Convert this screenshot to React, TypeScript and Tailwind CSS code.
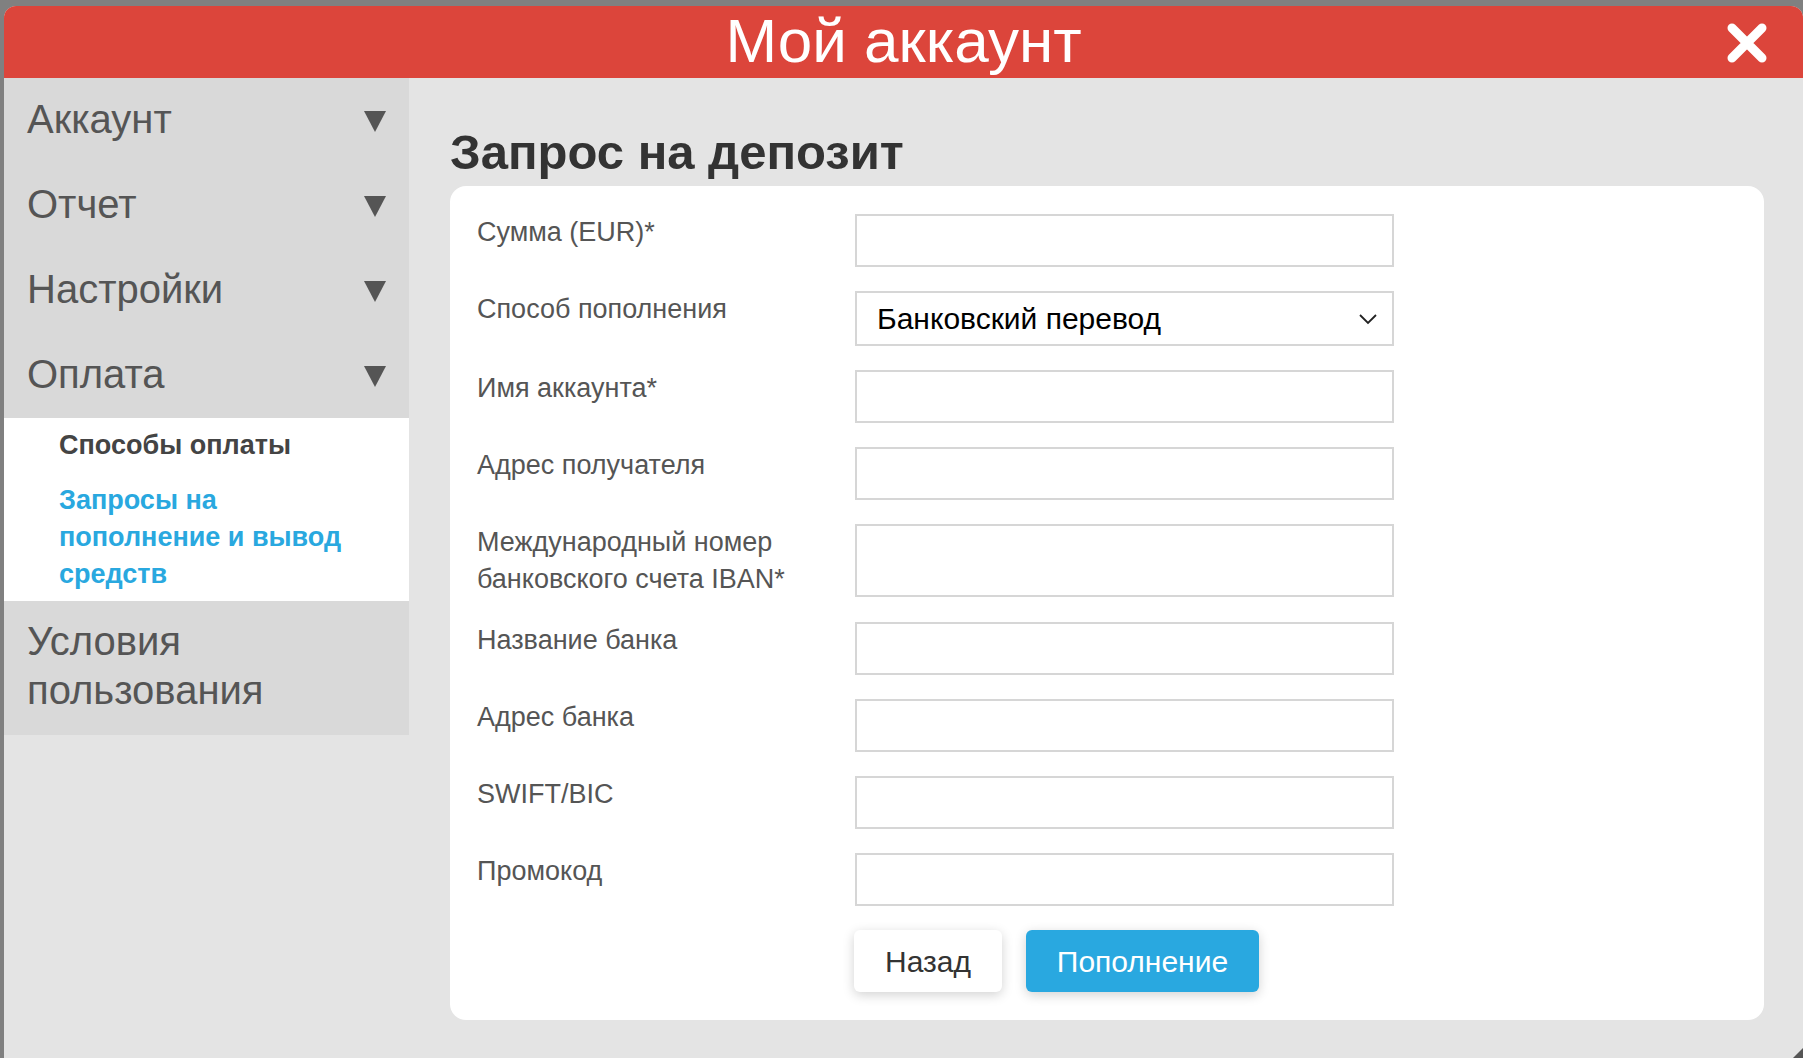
import { useState } from "react";

const fields = [
  { label: "Сумма (EUR)*", h: "h-[53px]" },
  { label: "Способ пополнения", select: true },
  { label: "Имя аккаунта*", h: "h-[53px]" },
  { label: "Адрес получателя", h: "h-[53px]" },
  { label: "Международный номер банковского счета IBAN*", h: "h-[73px]" },
  { label: "Название банка", h: "h-[53px]" },
  { label: "Адрес банка", h: "h-[53px]" },
  { label: "SWIFT/BIC", h: "h-[53px]" },
  { label: "Промокод", h: "h-[53px]" },
];

function Arrow() {
  return (
    <svg width="24" height="24" viewBox="0 0 24 24" className="shrink-0">
      <polygon points="1,2 23,2 12,23" fill="#555" />
    </svg>
  );
}

function MenuItem({ title }: { title: string }) {
  return (
    <div className="h-[85px] flex items-center justify-between pl-[23px] pr-[22px]">
      <span className="text-[40px] text-[#555] pb-[4px]">{title}</span>
      <Arrow />
    </div>
  );
}

export default function App() {
  const [method, setMethod] = useState("bank");
  return (
    <div className="w-[1803px] h-[1058px] bg-[#808080] pt-[6px] pl-[4px] overflow-hidden font-['Liberation_Sans',Arial,sans-serif]">
      <div className="h-full flex flex-col rounded-t-[12px] overflow-hidden bg-[#e4e4e4] relative">
        <div className="h-[72px] shrink-0 bg-[#dc453b] flex items-start justify-center relative">
          <h1 className="text-[62px] leading-[70px] text-white">Мой аккаунт</h1>
          <button className="absolute right-[35px] top-[16px]">
            <svg width="42" height="42" viewBox="0 0 42 42">
              <path d="M6 6 L36 36 M36 6 L6 36" stroke="#fff" strokeWidth="9" strokeLinecap="round" />
            </svg>
          </button>
        </div>

        <div className="flex flex-1">
          <aside className="w-[405px] self-start bg-[#d9d9d9]">
            <MenuItem title="Аккаунт" />
            <MenuItem title="Отчет" />
            <MenuItem title="Настройки" />
            <MenuItem title="Оплата" />
            <div className="bg-white pl-[55px] pt-[9px] pb-[8px] font-bold text-[27px] leading-[37px]">
              <div className="text-[#444]">Способы оплаты</div>
              <div className="text-[#29a8df] mt-[18px] w-[310px]">Запросы на пополнение и вывод средств</div>
            </div>
            <div className="px-[23px] pt-[16px] pb-[20px] text-[40px] leading-[49px] text-[#555]">
              Условия пользования
            </div>
          </aside>

          <main className="flex-1 pl-[41px] pr-[39px] pt-[50px]">
            <h2 className="text-[49px] leading-[48px] font-bold text-[#333] mb-[10px]">Запрос на депозит</h2>
            <div className="bg-white rounded-[16px] pl-[27px] pt-[28px] pb-[28px] flex flex-col gap-[24px]">
              {fields.map((f) => (
                <div key={f.label} className="flex">
                  <label className="w-[378px] pr-[20px] text-[27px] leading-[37px] text-[#555]">{f.label}</label>
                  {f.select ? (
                    <div className="w-[539px] h-[55px] border-2 border-[#d6d6d6] flex items-center justify-between pl-[20px] pr-[14px]">
                      <select
                        value={method}
                        onChange={(e) => setMethod(e.target.value)}
                        className="appearance-none bg-transparent outline-none text-[30px] text-black flex-1"
                      >
                        <option value="bank">Банковский перевод</option>
                      </select>
                      <svg width="20" height="12" viewBox="0 0 20 12">
                        <path d="M2 2 L10 10 L18 2" stroke="#222" strokeWidth="1.8" fill="none" />
                      </svg>
                    </div>
                  ) : (
                    <input className={`w-[539px] ${f.h} border-2 border-[#d6d6d6] outline-none px-3 text-[24px]`} />
                  )}
                </div>
              ))}
              <div className="flex gap-[24px] pl-[377px]">
                <button className="w-[148px] h-[62px] rounded-[6px] bg-white text-[30px] text-[#333] shadow-[0_3px_12px_rgba(0,0,0,0.18)]">
                  Назад
                </button>
                <button className="w-[233px] h-[62px] rounded-[6px] bg-[#29a8e0] text-[30px] text-white shadow-[0_3px_12px_rgba(0,0,0,0.18)]">
                  Пополнение
                </button>
              </div>
            </div>
          </main>
        </div>

        <svg width="10" height="10" viewBox="0 0 10 10" className="absolute right-0 bottom-0">
          <polygon points="10,0 10,10 0,10" fill="#555" />
        </svg>
      </div>
    </div>
  );
}
